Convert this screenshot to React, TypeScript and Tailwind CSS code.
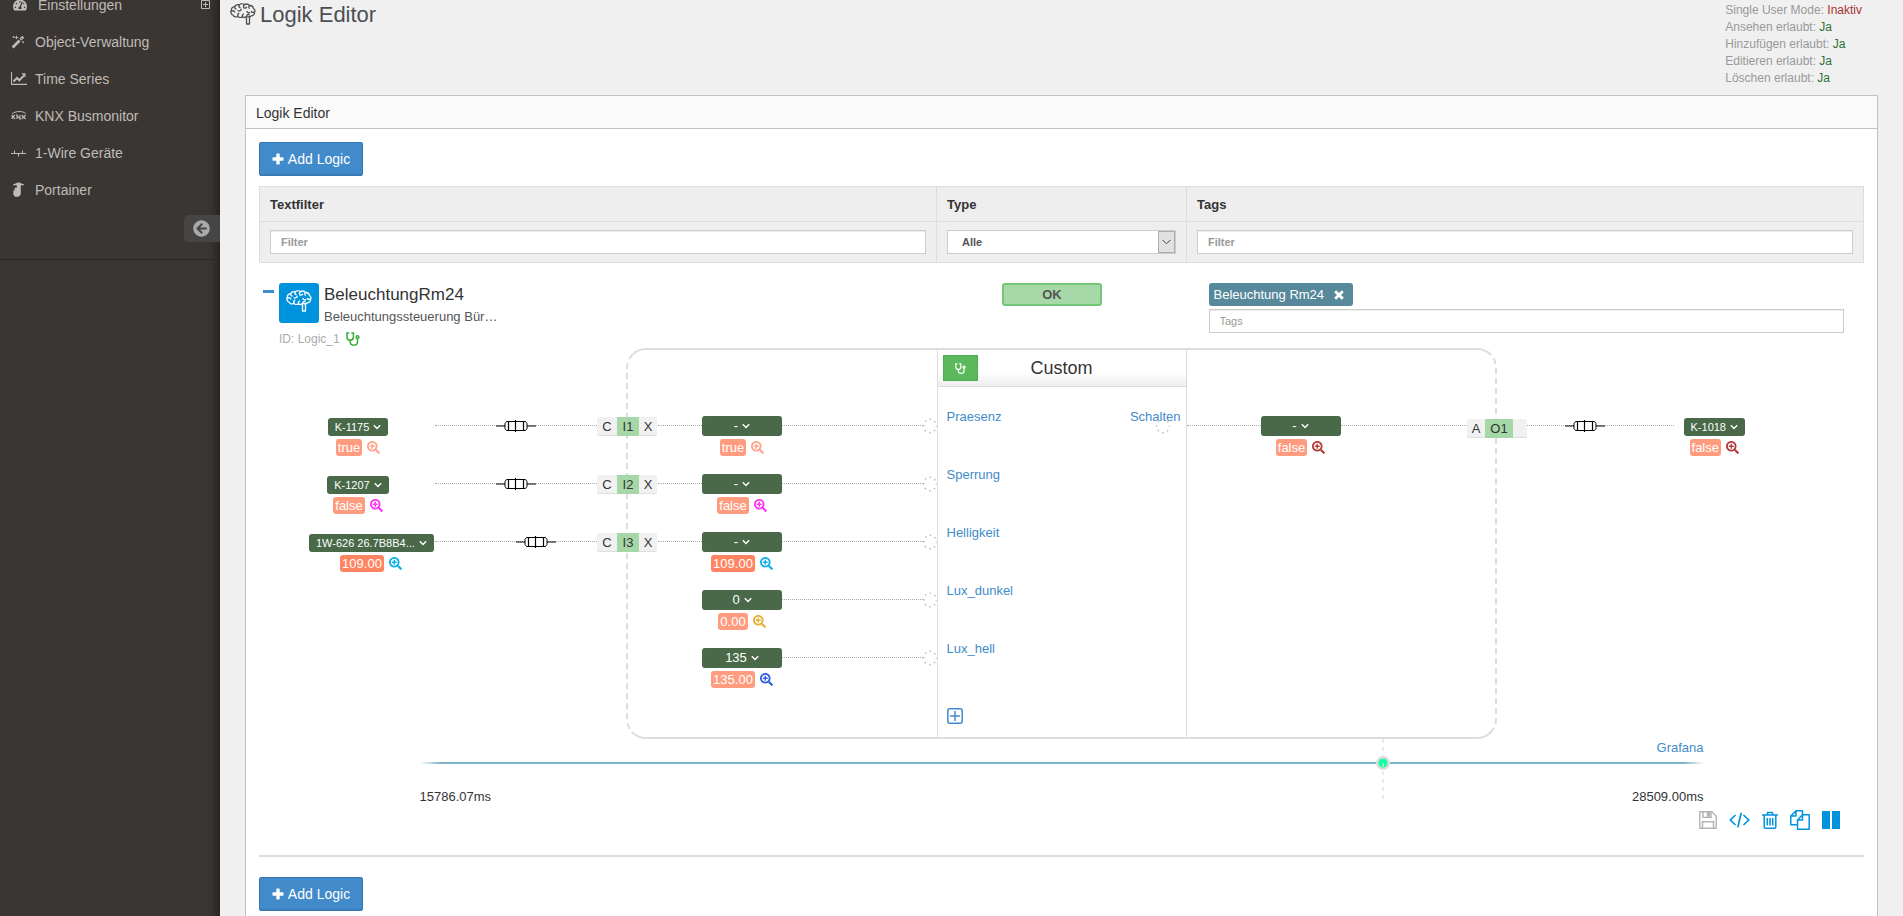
import React from 'react';
import { FaArrowCircleLeft, FaSearchPlus, FaTachometerAlt } from 'react-icons/fa';

type NodeValue = {
  text: string;
  iconClass: string;
  strong?: boolean;
};

type InputRow = {
  label: string;
  constant: string;
  value: NodeValue;
  source?: { name: string; port: string; wide?: boolean };
};

const inputs: InputRow[] = [
  {
    label: 'Praesenz',
    constant: '-',
    value: { text: 'true', iconClass: 'text-[#ffa58c]' },
    source: { name: 'K-1175', port: 'I1' },
  },
  {
    label: 'Sperrung',
    constant: '-',
    value: { text: 'false', iconClass: 'text-[#ff33f5]' },
    source: { name: 'K-1207', port: 'I2' },
  },
  {
    label: 'Helligkeit',
    constant: '-',
    value: { text: '109.00', iconClass: 'text-[#0fb0ea]', strong: true },
    source: { name: '1W-626 26.7B8B4...', port: 'I3', wide: true },
  },
  { label: 'Lux_dunkel', constant: '0', value: { text: '0.00', iconClass: 'text-[#e8b030]' } },
  { label: 'Lux_hell', constant: '135', value: { text: '135.00', iconClass: 'text-[#3060e0]' } },
];

const output: NodeValue = { text: 'false', iconClass: 'text-[#b53c3c]' };

const permissions = [
  { label: 'Single User Mode', value: 'Inaktiv', valueClass: 'text-[#a83232]' },
  { label: 'Ansehen erlaubt', value: 'Ja', valueClass: 'text-[#2f7034]' },
  { label: 'Hinzufügen erlaubt', value: 'Ja', valueClass: 'text-[#2f7034]' },
  { label: 'Editieren erlaubt', value: 'Ja', valueClass: 'text-[#2f7034]' },
  { label: 'Löschen erlaubt', value: 'Ja', valueClass: 'text-[#2f7034]' },
];

const BrainIcon = ({ className }: { className?: string }) => (
  <svg viewBox="0 0 26 22" className={className} fill="none" stroke="currentColor" strokeWidth="1.3" strokeLinecap="round" strokeLinejoin="round">
    <path d="M16.5 13.6c-1 .8-3 1-4 .1-1.300 1-3.600 1-4.600-.2-1.800.9-4.300.3-5-1.500C.9 11.300.4 9 1.300 7.600 1.300 5.500 3 3.900 4.700 3.700 5.500 2 7.800 1.400 9.200 1.900c1.400-1.200 4-1.300 5.300-.3 1.700-.8 4-.3 4.900.9 1.900-.1 3.600 1.100 3.900 2.700 1.500.9 2.100 2.900 1.200 4.300.1 1.800-1.400 3.300-3.100 3.300-1 .9-2.500 1.200-3.600.8" />
    <path d="M16.500 13.600V21h3V13.200" />
    <path d="M4.700 3.700c-.2 1.200.3 2 1.300 2.400M1.500 8.200c1.400-.7 2.700-.3 3.300.8M8 13.300c-.6-1.300-.2-2.500.8-3M9.200 2c-.5 1.200-.2 2.200.8 2.700M8 7.800c1.600.4 3-.3 3.200-1.700M12.500 13.500c-.4-1 0-2 1-2.400M14.300 1.900c-1 .8-1.200 2-.4 3M13.900 4.900c1 .4 2.200.1 2.700-.8M16.500 13.400c.3-1.300 1.200-2 2.500-1.900M17 8.500c.4 1.100 1.500 1.700 2.600 1.200M19.400 2.700c-.7.7-.8 1.700-.2 2.500M24.200 9c-1 .6-2.200.4-2.900-.5" />
  </svg>
);

const StethoscopeIcon = ({ className }: { className?: string }) => (
  <svg viewBox="0 0 14 14" className={className} fill="none" stroke="currentColor" strokeWidth="1.5" strokeLinecap="round">
    <path d="M2.600 1H1v4c0 1.900 1.300 3.200 3.200 3.200S7.400 6.900 7.400 5V1H5.800" />
    <path d="M4.200 8.300v1.800c0 1.800 1.600 3.100 3.600 3.100s3.700-1.300 3.700-3.100V6.600" />
    <circle cx="11.500" cy="5.200" r="1.400" />
  </svg>
);

const PlusIcon = () => (
  <svg viewBox="0 0 12 12" className="h-3 w-3" fill="currentColor">
    <path d="M5 .5h2q.7 0 .7.7v3.100h3.100q.7 0 .7.700v2q0 .7-.7.7H7.700v3.100q0 .7-.7.7H5q-.7 0-.7-.7V7.700H1.200Q.5 7.700.5 7V5q0-.7.7-.7h3.100V1.200Q4.300.5 5 .5z" />
  </svg>
);

const CrossIcon = () => (
  <svg viewBox="0 0 10 10" className="h-[10px] w-[10px]" fill="none" stroke="currentColor" strokeWidth="2.800">
    <path d="M1.200 1.200l7.600 7.600M8.800 1.200 1.200 8.800" />
  </svg>
);

const MagicIcon = () => (
  <svg viewBox="0 0 14 14" className="h-[14px] w-[14px]" fill="none" stroke="currentColor">
    <path d="M1.600 12.400 8.600 5.400" strokeWidth="2.800" />
    <path d="M9.400 4.600 12.200 1.800" strokeWidth="2.800" />
    <path d="M9.700 2.700l1.600 1.600" stroke="#3a3633" strokeWidth=".8" />
    <path d="M2.600 1v2M1.600 2h2M5.500.8v3.400M3.800 2.500h3.400M12 6.200v2M11 7.200h2" strokeWidth=".9" />
  </svg>
);

const ChartIcon = () => (
  <svg viewBox="0 0 16 13" className="h-[13px] w-4" fill="none" stroke="currentColor">
    <path d="M.5 0v12.400H16" strokeWidth="1.100" />
    <path d="M2.500 9.500 6 6l2.300 2.300 4.600-4.700" strokeWidth="2" />
    <path d="M10.300 1.200h4.200v4.200z" fill="currentColor" stroke="none" />
  </svg>
);

const ChevronIcon = () => (
  <svg viewBox="0 0 8 6" className="h-[6px] w-2 shrink-0" fill="none" stroke="currentColor" strokeWidth="1.400">
    <path d="M.8 1.200 4 4.400l3.200-3.200" />
  </svg>
);

const ResistorIcon = () => (
  <svg viewBox="0 0 40 12" className="h-3 w-10 shrink-0" fill="none" stroke="#000">
    <path d="M0 6h10M30 6h10" strokeWidth="1.200" />
    <path d="M10.500 1.500h19l1.500 2v5l-1.500 2h-19L9 8.500v-5z" fill="#fff" strokeWidth="1" />
    <path d="M12.500 1.500v9M19.500 0v12M27.500 1.500v9" strokeWidth="1.200" />
  </svg>
);

const PortIcon = () => (
  <svg viewBox="0 0 14 16" className="h-4 w-[14px] shrink-0" fill="none" stroke="#bbb">
    <ellipse cx="7" cy="8" rx="6.300" ry="6.800" strokeWidth="1.400" strokeDasharray="1.500 3.650" strokeDashoffset=".8" />
  </svg>
);

const KnxIcon = () => (
  <svg viewBox="0 0 16 9" className="h-[9px] w-4" fill="none" stroke="currentColor">
    <path d="M1 3C4-.2 12-.2 14.800 2.500" strokeWidth="1" />
    <path d="M1.200 4v4M4 4 1.800 6 4.200 8M6 8V4.200L9 8V4M10.700 4l3.900 4M14.600 4l-3.900 4" strokeWidth="1.200" />
  </svg>
);

const OneWireIcon = () => (
  <svg viewBox="0 0 16 8" className="h-2 w-4" fill="none" stroke="currentColor" strokeWidth="1">
    <path d="M0 4.500h15M3.500 1.500v3M7.500 4.500v3M11.500 1.500v3" />
  </svg>
);

const PortainerIcon = () => (
  <svg viewBox="0 0 14 15" className="h-[15px] w-[14px]" fill="currentColor">
    <path d="M2 2.400 7.500.3 13 2.400v.8H9.800v8.800l-1 1.800-1.800.9H4.200L2.400 13V8.600h1.200V5.800h2.200V3.200H2z" />
  </svg>
);

const PlusSquareIcon = () => (
  <svg viewBox="0 0 16 16" className="h-4 w-4" fill="none" stroke="currentColor" strokeWidth="1.500">
    <rect x=".8" y=".8" width="14.400" height="14.400" rx="2" />
    <path d="M3 8h10M8 3v10" />
  </svg>
);

const AddLogicButton = () => (
  <button className="flex h-[34px] w-[104px] items-center justify-center gap-1 rounded-xs border border-[#3276b1] bg-[#428bca] text-sm text-white shadow-[inset_0_-2px_0_rgba(0,0,0,0.05)]">
    <PlusIcon />
    <span>Add Logic</span>
  </button>
);

const ValueBadge = ({ value }: { value: NodeValue }) => (
  <div className="mt-[3px] flex h-[17px] items-center justify-center gap-[5px]">
    <span className={`rounded-[3px] px-[2px] text-[13px] leading-[17px] text-white ${value.strong ? 'bg-[#ff8562]' : 'bg-[#ff9c80]'}`}>
      {value.text}
    </span>
    <button aria-label="Zoom" className={value.iconClass}>
      <FaSearchPlus className="h-[13px] w-[13px]" />
    </button>
  </div>
);

const ConstantNode = ({ text, value }: { text: string; value: NodeValue }) => (
  <div className="w-20 shrink-0">
    <button className="flex h-5 w-full items-center justify-center gap-1 rounded-[3px] bg-[#496949] text-[13px] text-white">
      {text}
      <ChevronIcon />
    </button>
    <ValueBadge value={value} />
  </div>
);

const DeviceNode = ({ name, value }: { name: string; value: NodeValue }) => (
  <div className="mt-[2px]">
    <button className="mx-auto flex h-[18px] items-center gap-1 rounded-[3px] bg-[#496949] px-[7px] text-[11px] whitespace-nowrap text-white">
      {name}
      <ChevronIcon />
    </button>
    <ValueBadge value={value} />
  </div>
);

const Wire = ({ className }: { className?: string }) => (
  <div className={`mt-[9px] h-px border-t border-dotted border-[#aaa] ${className ?? ''}`} />
);

const NavItem = ({ icon, children }: { icon: React.ReactNode; children: React.ReactNode }) => (
  <li>
    <a href="#" className="flex h-[37px] items-center pl-[11px] text-sm">
      <span className="flex w-6 items-center">{icon}</span>
      {children}
    </a>
  </li>
);

const Sidebar = () => (
  <aside className="w-[220px] shrink-0 bg-[#3a3633] text-[#c0bbb7] shadow-[inset_-12px_0_10px_-8px_rgba(0,0,0,0.4)]">
    <div className="border-b border-[#2b2826] pb-[17px]">
      <ul className="-mt-[14px]">
        <li>
          <a href="#" className="flex h-[37px] items-center pr-[10px] pl-[13px] text-sm">
            <FaTachometerAlt className="h-[14px] w-[14px]" />
            <span className="ml-[11px] flex-1">Einstellungen</span>
            <svg viewBox="0 0 9 9" className="h-[9px] w-[9px]" fill="none" stroke="currentColor">
              <path d="M.5.5h8v8h-8zM4.500 2v5M2 4.500h5" />
            </svg>
          </a>
        </li>
        <NavItem icon={<MagicIcon />}>Object-Verwaltung</NavItem>
        <NavItem icon={<ChartIcon />}>Time Series</NavItem>
        <NavItem icon={<KnxIcon />}>KNX Busmonitor</NavItem>
        <NavItem icon={<OneWireIcon />}>1-Wire Geräte</NavItem>
        <NavItem icon={<PortainerIcon />}>Portainer</NavItem>
      </ul>
      <button aria-label="Menü einklappen" className="mt-[7px] ml-auto flex h-[27px] w-9 items-center rounded-l-[5px] bg-[#474544] pl-[9px] text-[#a9a9a9]">
        <FaArrowCircleLeft className="h-[17px] w-[17px]" />
      </button>
    </div>
  </aside>
);

const inputClass = 'block h-6 w-full border border-[#ccc] bg-white px-[10px] text-[11px] shadow-[inset_0_1px_0_#eee] placeholder:text-[#999]';

const FilterTable = () => (
  <table className="mt-[10px] w-full table-fixed border-collapse bg-[#eee] text-[13px]">
    <colgroup>
      <col />
      <col className="w-[250px]" />
      <col />
    </colgroup>
    <thead>
      <tr className="h-[35px] text-left">
        <th className="border border-[#ddd] px-[10px] pt-[2px]"><label htmlFor="textfilter">Textfilter</label></th>
        <th className="border border-[#ddd] px-[10px] pt-[2px]"><label htmlFor="type">Type</label></th>
        <th className="border border-[#ddd] px-[10px] pt-[2px]"><label htmlFor="tags">Tags</label></th>
      </tr>
    </thead>
    <tbody>
      <tr className="h-[41px]">
        <td className="border border-[#ddd] px-[10px]">
          <input id="textfilter" placeholder="Filter" className={`${inputClass} font-bold`} />
        </td>
        <td className="border border-[#ddd] px-[10px]">
          <div className="relative">
            <select id="type" className="block h-6 w-full appearance-none border border-[#ccc] bg-white px-[14px] text-[11px] font-bold text-[#555]">
              <option>Alle</option>
            </select>
            <span className="pointer-events-none absolute top-px right-px flex h-[22px] w-[17px] items-center justify-center border border-[#adadad] bg-[#e1e1e1] text-[#444]">
              <svg viewBox="0 0 9 6" className="h-[6px] w-[9px]" fill="none" stroke="currentColor">
                <path d="M.5.8l4 4 4-4" />
              </svg>
            </span>
          </div>
        </td>
        <td className="border border-[#ddd] px-[10px]">
          <input id="tags" placeholder="Filter" className={`${inputClass} font-bold`} />
        </td>
      </tr>
    </tbody>
  </table>
);

const LogicHeader = () => (
  <div className="grid h-[85px] grid-cols-[1fr_250px_1fr] pt-5">
    <div className="flex items-start">
      <button aria-label="Einklappen" className="mt-[7px] ml-1 w-4">
        <span className="block h-[3px] w-[11px] bg-[#428bca]" />
      </button>
      <div>
        <div className="flex gap-[5px]">
          <span className="flex h-10 w-10 justify-center rounded-[3px] bg-[#0093dd] pt-[7px] text-white">
            <BrainIcon className="h-[22px] w-[26px]" />
          </span>
          <div className="w-[174px]">
            <div className="text-[17px] leading-6">BeleuchtungRm24</div>
            <div className="text-[13px] leading-5 whitespace-nowrap text-[#555]">Beleuchtungssteuerung Bür…</div>
          </div>
        </div>
        <div className="mt-[2px] flex items-center gap-[6px] text-xs leading-5 text-[#aaa]">
          ID: Logic_1
          <StethoscopeIcon className="h-[14px] w-[14px] text-[#39ac39]" />
        </div>
      </div>
    </div>
    <div className="pr-[19px]">
      <div className="mx-auto h-[23px] w-[100px] rounded-[3px] border-2 border-[#75c778] bg-[#a6d8a8] text-center text-[13px] leading-[19px] font-bold text-[#555]">
        OK
      </div>
    </div>
    <div className="pr-5 pl-[22px]">
      <div className="flex h-[23px] w-36 items-center justify-between rounded-[3px] bg-[#57889c] pr-[9px] pl-[5px] text-[13px] text-white">
        Beleuchtung Rm24
        <button aria-label="Tag entfernen"><CrossIcon /></button>
      </div>
      <input aria-label="Tags" placeholder="Tags" className={`${inputClass} mt-[3px]`} />
    </div>
  </div>
);

const LogicCanvas = () => (
  <div className="flex text-[13px]">
    <div className="flex-1 pt-[60px]">
      {inputs.map((row) => row.source && (
        <div key={row.label} className="-mr-[34px] flex h-[58px] items-start pt-2 pl-[50px]">
          <div className="w-[126px]">
            <div className={row.source.wide ? 'w-[124px]' : 'w-[98px]'}>
              <DeviceNode name={row.source.name} value={row.value} />
            </div>
          </div>
          <div className="relative flex-1">
            <Wire />
            <div className={`absolute inset-x-0 top-1 flex justify-center ${row.source.wide ? 'pl-10' : ''}`}>
              <ResistorIcon />
            </div>
          </div>
          <div className="relative z-10 mr-[3px] mt-px flex h-[19px] w-[60px] items-center rounded-[2px] bg-[#f1f1f1] text-center shadow-[inset_0_-1px_0_rgba(0,0,0,0.08)]">
            <span className="w-5">C</span>
            <span className="w-[22px] bg-[#a5d8a6] leading-[19px]">{row.source.port}</span>
            <span className="flex-1">X</span>
          </div>
        </div>
      ))}
    </div>

    <div className="flex h-[391px] w-[871px] rounded-[20px] border-2 border-[#ddd] [border-style:solid_dashed]">
      <div className="flex-1 pt-[58px]">
        {inputs.map((row) => (
          <div key={row.label} className="flex h-[58px] items-start pt-2">
            <Wire className={row.source ? 'ml-[30px] w-11' : 'invisible ml-[30px] w-11'} />
            <ConstantNode text={row.constant} value={row.value} />
            <Wire className="flex-1" />
            <div className="mt-[2px]"><PortIcon /></div>
          </div>
        ))}
      </div>

      <div className="w-[250px] border-x border-[#ddd]">
        <div className="relative flex h-[37px] items-center justify-center border-b border-[#ddd] bg-linear-to-b from-white from-60% to-[#eee] text-lg">
          <button aria-label="Diagnose" className="absolute top-[5px] left-[5px] flex h-[26px] w-[35px] items-center justify-center border border-[#4cae4c] bg-[#5cb85c] text-white">
            <StethoscopeIcon className="h-[11px] w-[11px]" />
          </button>
          Custom
        </div>
        <div className="pt-[21px] text-[#428bca]">
          {inputs.map((row, index) => (
            <div key={row.label} className="relative flex h-[58px] justify-between pr-[5px] pl-[9px] leading-[18px]">
              <a href="#">{row.label}</a>
              {index === 0 && <a href="#">Schalten</a>}
              {index === 0 && (
                <span className="absolute top-[10px] right-4"><PortIcon /></span>
              )}
            </div>
          ))}
          <button aria-label="Eingang hinzufügen" className="mt-[10px] ml-[9px] block"><PlusSquareIcon /></button>
        </div>
      </div>

      <div className="flex-1 pt-[58px]">
        <div className="flex items-start pt-2">
          <Wire className="w-[74px]" />
          <ConstantNode text="-" value={output} />
          <Wire className="flex-1" />
          <div className="relative z-10 -mr-8 mt-[3px] flex h-[19px] w-[60px] items-center rounded-[2px] bg-[#f1f1f1] text-center shadow-[inset_0_-1px_0_rgba(0,0,0,0.08)]">
            <span className="w-[18px]">A</span>
            <span className="w-7 bg-[#a5d8a6] leading-[19px]">O1</span>
          </div>
        </div>
      </div>
    </div>

    <div className="flex-1 pt-[60px]">
      <div className="flex items-start pt-2 pr-[119px]">
        <div className="relative flex-1">
          <Wire />
          <div className="absolute inset-x-0 top-1 flex justify-center"><ResistorIcon /></div>
        </div>
        <div className="ml-[10px]"><DeviceNode name="K-1018" value={output} /></div>
      </div>
    </div>
  </div>
);

const Timeline = () => (
  <div className="relative mx-auto h-[65px] w-4/5 text-[13px]">
    <div className="flex h-[23px] justify-end leading-[18px]"><a href="#" className="text-[#428bca]">Grafana</a></div>
    <div className="h-[2px] bg-[linear-gradient(to_right,transparent,#7fb5cb_20px,#7fb5cb_calc(100%-20px),transparent)]" />
    <div className="mt-6 flex justify-between leading-[18px]">
      <span>15786.07ms</span>
      <span>28509.00ms</span>
    </div>
    <svg viewBox="0 0 14 61" className="absolute top-0 left-3/4 h-[61px] w-[14px] -translate-x-1/2">
      <circle cx="7" cy="24" r="5.800" fill="#10ffa5" stroke="#dcdcdc" strokeWidth="2.400" />
      <path d="M7 0v61" stroke="#ddd" strokeWidth="1.200" strokeDasharray="4 4" />
    </svg>
  </div>
);

const ActionBar = () => (
  <div className="mt-1 flex h-6 items-center justify-end gap-3 pr-6 text-[#0093dd]">
    <button aria-label="Speichern" className="text-[#b3b3b3]">
      <svg viewBox="0 0 18 18" className="h-[18px] w-[18px]" fill="none" stroke="currentColor" strokeWidth="1.400">
        <path d="M.8.8h12l4.400 4.400v12H.8zM4 .8v5.600h8V.8M3.500 17v-6.200h11V17" />
        <path d="M8.500 2h2v3h-2z" fill="currentColor" />
      </svg>
    </button>
    <button aria-label="Code">
      <svg viewBox="0 0 21 16" className="h-4 w-[21px]" fill="none" stroke="currentColor" strokeWidth="1.700">
        <path d="M6.500 3 1.300 8l5.200 5M14.500 3l5.200 5-5.200 5M12.200.8 8.800 15.400" />
      </svg>
    </button>
    <button aria-label="Löschen">
      <svg viewBox="0 0 16 18" className="h-[18px] w-4" fill="none" stroke="currentColor" strokeWidth="1.500">
        <path d="M0 4h16M2.200 4v11.700c0 .9.6 1.500 1.400 1.500h8.800c.8 0 1.400-.6 1.400-1.500V4M4.800 4l1-2.600h4.400l1 2.600M5.300 7v7.500M8 7v7.500M10.700 7v7.500" />
      </svg>
    </button>
    <button aria-label="Kopieren">
      <svg viewBox="0 0 20 20" className="h-5 w-5" fill="none" stroke="currentColor" strokeWidth="1.500" strokeLinejoin="round">
        <path d="M12.500 4.800V.8H6L.8 6v8.700h6.700M6 .8V6H.8M19.200 4.800h-6.700L7.500 10v9.200h11.700zM12.500 4.800V10h-5" />
      </svg>
    </button>
    <button aria-label="Pause" className="flex gap-[2px]">
      <span className="h-[18px] w-2 bg-[#0093dd]" />
      <span className="h-[18px] w-2 bg-[#0093dd]" />
    </button>
  </div>
);

export default function App() {
  return (
    <div className="flex h-screen overflow-hidden bg-[#f0f0f0] font-['Liberation_Sans',Arial,sans-serif] text-[#333]">
      <Sidebar />
      <main className="flex min-w-0 flex-1 flex-col px-[25px]">
        <header className="flex h-[95px] shrink-0 items-start justify-between pr-4">
          <h1 className="-ml-[15px] flex items-start gap-1 text-[22px] leading-[30px] text-[#4c4f53]">
            <BrainIcon className="mt-[3px] h-[22px] w-[26px]" />
            Logik Editor
          </h1>
          <ul className="pt-[2px] text-xs leading-[17px] text-[#999]">
            {permissions.map((permission) => (
              <li key={permission.label}>
                {permission.label}: <span className={permission.valueClass}>{permission.value}</span>
              </li>
            ))}
          </ul>
        </header>

        <section className="flex-1 border border-b-0 border-[#c2c2c2] bg-white">
          <h2 className="flex h-[33px] items-center border-b border-[#c2c2c2] bg-[#fafafa] px-[10px] pt-[2px] text-sm">Logik Editor</h2>
          <div className="px-[13px] pt-[13px] pb-10">
            <AddLogicButton />
            <FilterTable />
            <LogicHeader />
            <LogicCanvas />
            <Timeline />
            <ActionBar />
            <hr className="mt-[23px] mb-5 border-t-2 border-[#ddd]" />
            <AddLogicButton />
          </div>
        </section>
      </main>
    </div>
  );
}
